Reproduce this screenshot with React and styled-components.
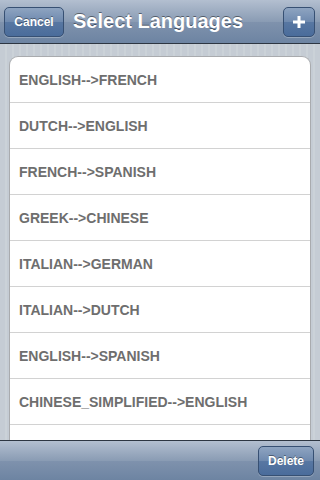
import React from 'react'
import styled, { createGlobalStyle } from 'styled-components'

const Global = createGlobalStyle`
    html, body {
        margin: 0;
        padding: 0;
    }
    body {
        font-family: "Liberation Sans", Arial, sans-serif;
    }
`

const Screen = styled.div`
    width: 320px;
    height: 480px;
    display: flex;
    flex-direction: column;
    overflow: hidden;
    background-color: #c5ccd4;
    background-image: repeating-linear-gradient(
        90deg,
        #c5ccd4 0px,
        #c5ccd4 5px,
        #cbd2d8 5px,
        #cbd2d8 7px
    );
`

const NavBar = styled.div`
    height: 44px;
    flex-shrink: 0;
    display: flex;
    align-items: center;
    padding: 0 5px 0 4px;
    gap: 9px;
    box-sizing: border-box;
    border-bottom: 1px solid #2d3642;
    background: linear-gradient(#b3bfd0 0%, #8a9cb4 50%, #7f92ad 51%, #6d84a2 100%);
`

const Title = styled.div`
    flex: 1;
    color: #fff;
    font-size: 20px;
    font-weight: 700;
    text-shadow: 0 -1px 0 rgba(0, 0, 0, 0.45);
    white-space: nowrap;
`

const BarButton = styled.button`
    height: 30px;
    min-width: ${({ $w }) => $w || 'auto'};
    padding: 0 ${({ $pad }) => $pad || '8px'};
    display: flex;
    align-items: center;
    justify-content: center;
    border: 1px solid #375073;
    border-radius: 5px;
    color: #fff;
    font-family: "Liberation Sans", Arial, sans-serif;
    font-size: 12px;
    font-weight: 700;
    text-shadow: 0 -1px 0 rgba(0, 0, 0, 0.4);
    background: linear-gradient(#8ea4c1 0%, #6e89ae 50%, #5877a2 51%, #4a6c9b 100%);
    box-shadow: 0 1px 0 rgba(255, 255, 255, 0.25);
`

const Content = styled.div`
    flex: 1;
    overflow: hidden;
    padding: 12px 9px 0 9px;
`

const Group = styled.div`
    background: #fff;
    border: 1px solid #a9abae;
    border-bottom: none;
    border-radius: 9px 9px 0 0;
    overflow: hidden;
`

const Row = styled.div`
    height: 45px;
    display: flex;
    align-items: center;
    padding-left: 9px;
    border-bottom: 1px solid #d2d2d2;
    color: #6e6e6e;
    font-size: 14px;
    font-weight: 700;
    &:last-child {
        border-bottom: none;
    }
`

const ToolBar = styled.div`
    height: 40px;
    flex-shrink: 0;
    display: flex;
    align-items: center;
    justify-content: flex-end;
    padding: 0 6px;
    box-sizing: border-box;
    border-top: 1px solid #2d3642;
    background: linear-gradient(#b3bfd0 0%, #8a9cb4 50%, #7f92ad 51%, #6d84a2 100%);
`

const PlusIcon = () => (
    <svg width="14" height="14" viewBox="0 0 14 14">
        <path d="M7 1v12M1 7h12" stroke="#fff" strokeWidth="3" />
    </svg>
)

const pairs = [
    'ENGLISH-->FRENCH',
    'DUTCH-->ENGLISH',
    'FRENCH-->SPANISH',
    'GREEK-->CHINESE',
    'ITALIAN-->GERMAN',
    'ITALIAN-->DUTCH',
    'ENGLISH-->SPANISH',
    'CHINESE_SIMPLIFIED-->ENGLISH',
    '',
]

const App = () => {
    return (
        <Screen>
            <Global />
            <NavBar>
                <BarButton $w="60px">Cancel</BarButton>
                <Title>Select Languages</Title>
                <BarButton $w="32px" $pad="0">
                    <PlusIcon />
                </BarButton>
            </NavBar>
            <Content>
                <Group>
                    {pairs.map((p, i) => (
                        <Row key={i}>{p}</Row>
                    ))}
                </Group>
            </Content>
            <ToolBar>
                <BarButton $w="56px">Delete</BarButton>
            </ToolBar>
        </Screen>
    )
}

export default App
